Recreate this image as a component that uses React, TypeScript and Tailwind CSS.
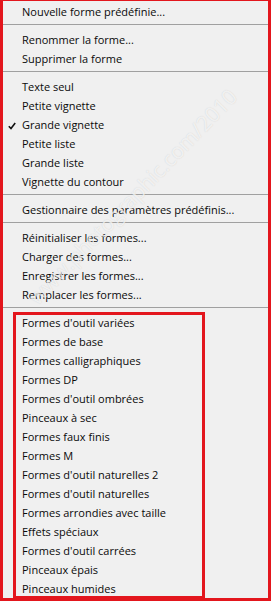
import React from "react";

type Entry = { label: string; checked?: boolean } | "sep";

const TOP_ENTRIES: Entry[] = [
  { label: "Nouvelle forme prédéfinie..." },
  "sep",
  { label: "Renommer la forme..." },
  { label: "Supprimer la forme" },
  "sep",
  { label: "Texte seul" },
  { label: "Petite vignette" },
  { label: "Grande vignette", checked: true },
  { label: "Petite liste" },
  { label: "Grande liste" },
  { label: "Vignette du contour" },
  "sep",
  { label: "Gestionnaire des paramètres prédéfinis..." },
  "sep",
  { label: "Réinitialiser les formes..." },
  { label: "Charger des formes..." },
  { label: "Enregistrer les formes..." },
  { label: "Remplacer les formes..." },
  "sep",
];

const BRUSH_SETS = [
  "Formes d'outil variées",
  "Formes de base",
  "Formes calligraphiques",
  "Formes DP",
  "Formes d'outil ombrées",
  "Pinceaux à sec",
  "Formes faux finis",
  "Formes M",
  "Formes d'outil naturelles 2",
  "Formes d'outil naturelles",
  "Formes arrondies avec taille",
  "Effets spéciaux",
  "Formes d'outil carrées",
  "Pinceaux épais",
  "Pinceaux humides",
];

function MenuItem({ label, checked }: { label: string; checked?: boolean }) {
  return (
    <div className="relative flex h-[19px] items-center pl-[19px] whitespace-nowrap">
      {checked ? (
        <svg
          className="absolute left-[5px] top-[6px]"
          width="8"
          height="8"
          viewBox="0 0 8 8"
        >
          <path
            d="M0.8 4.2 L3 6.6 L7.2 1"
            fill="none"
            stroke="#111"
            strokeWidth="1.6"
          />
        </svg>
      ) : null}
      {label}
    </div>
  );
}

function Separator() {
  return (
    <div className="pt-[2px] pb-[6px]">
      <div className="h-px bg-[#a0a0a0]" />
    </div>
  );
}

export default function App() {
  return (
    <div
      className="relative h-[601px] w-[271px] overflow-hidden border-t border-r-[3px] border-b-[3px] border-l-[3px] border-[#e3161d] bg-[#f0f0f0] pt-[2px] text-[11px] text-[#0a0a0a]"
      style={{ fontFamily: '"Open Sans", "Noto Sans", sans-serif' }}
    >
      {TOP_ENTRIES.map((entry, i) =>
        entry === "sep" ? (
          <Separator key={i} />
        ) : (
          <MenuItem key={i} label={entry.label} checked={entry.checked} />
        )
      )}

      <div className="relative">
        {BRUSH_SETS.map((name) => (
          <MenuItem key={name} label={name} />
        ))}
        {/* annotation box drawn over the preset list */}
        <div className="pointer-events-none absolute top-[-2px] bottom-[0px] left-[10px] w-[192px] border-[3px] border-[#e3161d]" />
      </div>

      {/* faint watermark */}
      <div className="pointer-events-none absolute left-[130px] top-[196px] -translate-x-1/2 -translate-y-1/2 -rotate-[46deg] whitespace-nowrap text-[21px] text-white/70 [text-shadow:0_0_1px_rgba(140,140,140,0.35)]">
        www.photographic.com/2010
      </div>
    </div>
  );
}
